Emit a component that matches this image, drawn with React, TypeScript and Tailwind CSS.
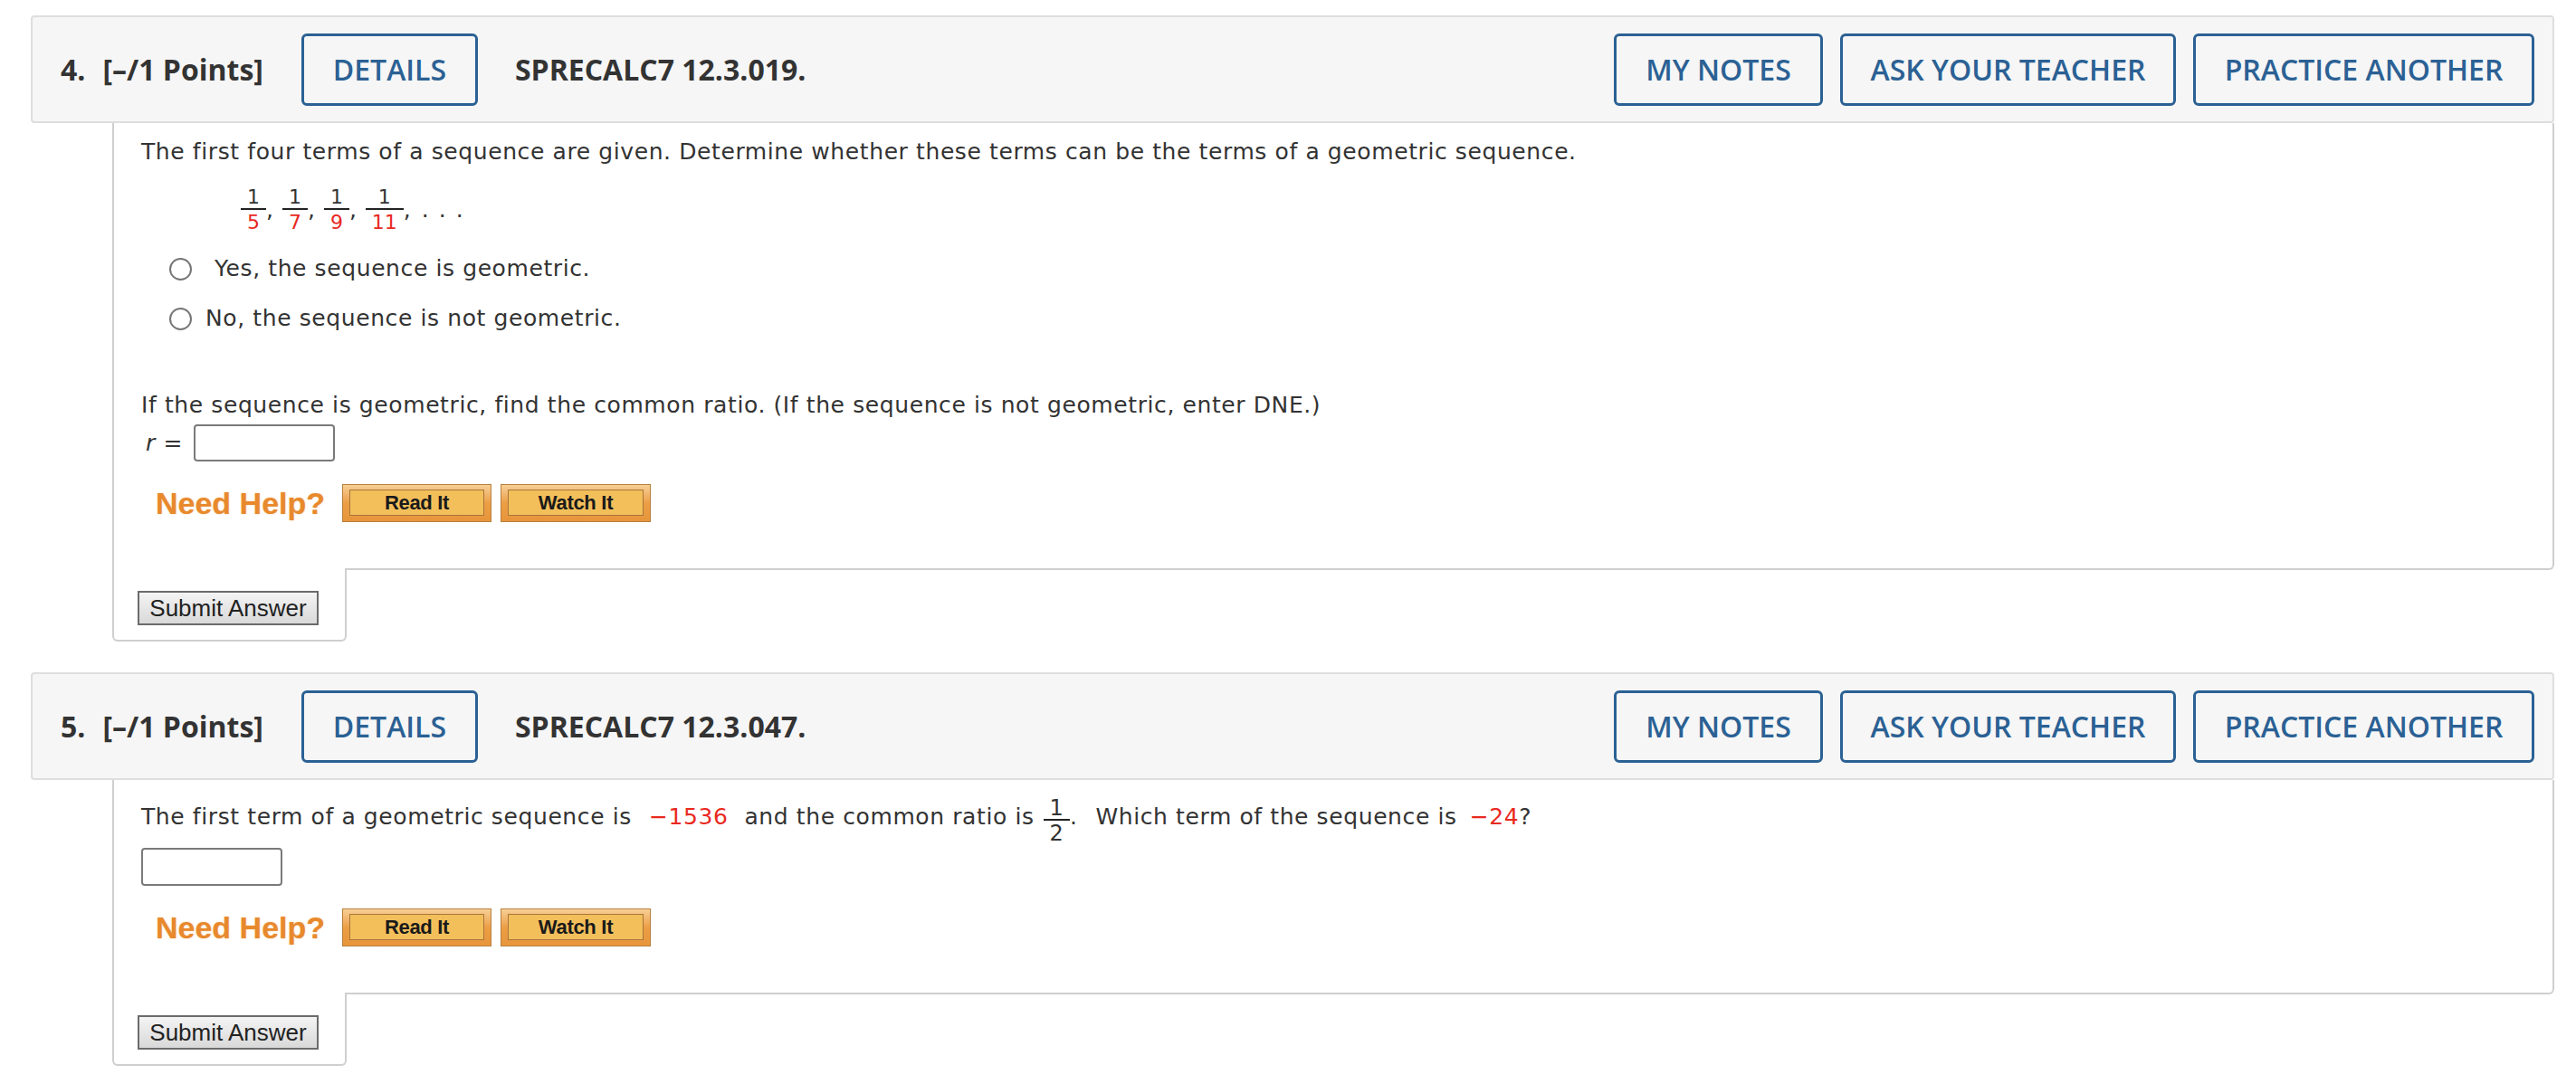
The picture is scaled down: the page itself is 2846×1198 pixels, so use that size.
import React from 'react';

const RED = 'text-[#e8291f]';

function HeaderBtn({ label, cls }: { label: string; cls: string }) {
  return (
    <div
      className={`${cls} h-[80px] box-border border-[3px] border-[#2b6194] rounded-[6px] flex items-center justify-center text-[32px] font-semibold text-[#2b6194]`}
    >
      {label}
    </div>
  );
}

function QuestionHeader({ num, code }: { num: string; code: string }) {
  return (
    <div className="h-[119px] box-border border-2 border-[#dedede] rounded-[4px] bg-[#f6f6f6] flex items-center pl-[31px] pr-[20px] font-['Open_Sans',sans-serif] text-[32px] font-bold text-[#333]">
      <span>{num}</span>
      <span className="ml-[19px]">[–/1 Points]</span>
      <HeaderBtn label="DETAILS" cls="w-[195px] ml-[42px]" />
      <span className="ml-[41px]">{code}</span>
      <div className="ml-auto flex gap-[19px]">
        <HeaderBtn label="MY NOTES" cls="w-[231px]" />
        <HeaderBtn label="ASK YOUR TEACHER" cls="w-[371px]" />
        <HeaderBtn label="PRACTICE ANOTHER" cls="w-[377px]" />
      </div>
    </div>
  );
}

function Frac({ n, d, dRed = true, size = 'text-[22px]' }: { n: string; d: string; dRed?: boolean; size?: string }) {
  return (
    <span className={`inline-flex flex-col items-stretch ${size} leading-[22px] tracking-normal`}>
      <span className="px-[7px] text-center">{n}</span>
      <span className="mt-[1px] h-[2px] bg-[#222]" />
      <span className={`mt-[3px] px-[7px] text-center ${dRed ? RED : ''}`}>{d}</span>
    </span>
  );
}

function HelpBtn({ label, cls }: { label: string; cls: string }) {
  return (
    <div
      className={`${cls} h-[42px] box-border border border-[#b7803c] bg-gradient-to-b from-[#f7cf95] via-[#ec9e45] to-[#e7953b] p-[5px_7px_6px_7px]`}
    >
      <div className="h-full box-border border border-[#a8763a] bg-[#f3bf5b] flex items-center justify-center font-['Liberation_Sans',Arial,sans-serif] font-bold text-[22px] tracking-[-0.3px] text-[#1a1a1a]">
        {label}
      </div>
    </div>
  );
}

function NeedHelp() {
  return (
    <div className="flex items-center h-[42px] tracking-normal">
      <span className="ml-[16px] w-[206px] font-['Liberation_Sans',Arial,sans-serif] font-bold text-[34px] text-[#e8892d] [text-shadow:0_0_2px_rgba(240,170,90,0.6)]">
        Need Help?
      </span>
      <HelpBtn label="Read It" cls="w-[165px]" />
      <HelpBtn label="Watch It" cls="w-[166px] ml-[10px]" />
    </div>
  );
}

function Radio({ cls }: { cls: string }) {
  return <span className={`${cls} w-[25px] h-[25px] shrink-0 box-border rounded-full border-2 border-[#767676] bg-white`} />;
}

function AnswerBox({ cls }: { cls: string }) {
  return <div className={`${cls} w-[156px] h-[41px] box-border border-2 border-[#7a7a7a] rounded-[4px] bg-white`} />;
}

function SubmitTab() {
  return (
    <div className="-mt-[2px] w-[259px] h-[81px] box-border border-x-2 border-b-2 border-[#cfcfcf] rounded-b-[6px] bg-white pl-[26px] pt-[25px]">
      <div className="w-[200px] h-[38px] box-border border-2 border-[#6b6b6b] bg-gradient-to-b from-[#f4f4f4] to-[#d9d9d9] flex items-center justify-center font-['Liberation_Sans',Arial,sans-serif] text-[26px] text-[#222]">
        Submit Answer
      </div>
    </div>
  );
}

const bodyCls =
  "border-x-2 border-b-2 border-[#cfcfcf] rounded-br-[6px] pl-[30px] font-['DejaVu_Sans','Verdana',sans-serif] text-[25px] tracking-[0.6px] text-[#333]";

export default function App() {
  return (
    <div className="w-[2846px] min-h-[1198px] bg-white pl-[34px] pt-[17px]">
      <div className="w-[2788px]">
        {/* question 4 */}
        <QuestionHeader num="4." code="SPRECALC7 12.3.019." />
        <div className="ml-[90px]">
          <div className={`${bodyCls} pt-[17px] pb-[51px]`}>
            <div className="leading-[30px]">
              The first four terms of a sequence are given. Determine whether these terms can be the terms of a geometric sequence.
            </div>
            <div className="mt-[22px] ml-[110px] h-[54px] flex items-center leading-[24px] tracking-normal">
              <Frac n="1" d="5" />
              <span className="mr-[10px]">,</span>
              <Frac n="1" d="7" />
              <span className="mr-[10px]">,</span>
              <Frac n="1" d="9" />
              <span className="mr-[10px]">,</span>
              <Frac n="1" d="11" />
              <span className="mr-[12px]">,</span>
              <span className="flex gap-[11px]">
                <span>.</span>
                <span>.</span>
                <span>.</span>
              </span>
            </div>
            <div className="mt-[23px] h-[30px] flex items-center">
              <Radio cls="ml-[31px]" />
              <span className="ml-[25px]">Yes, the sequence is geometric.</span>
            </div>
            <div className="mt-[25px] h-[30px] flex items-center">
              <Radio cls="ml-[31px]" />
              <span className="ml-[15px]">No, the sequence is not geometric.</span>
            </div>
            <div className="mt-[66px] leading-[30px]">
              If the sequence is geometric, find the common ratio. (If the sequence is not geometric, enter DNE.)
            </div>
            <div className="mt-[6px] flex items-center">
              <span className="ml-[5px]">
                <i>r</i> =
              </span>
              <AnswerBox cls="ml-[12px]" />
            </div>
            <div className="mt-[25px]">
              <NeedHelp />
            </div>
          </div>
          <SubmitTab />
        </div>

        {/* question 5 */}
        <div className="mt-[34px]">
          <QuestionHeader num="5." code="SPRECALC7 12.3.047." />
        </div>
        <div className="ml-[90px]">
          <div className={`${bodyCls} pt-[16px] pb-[51px]`}>
            <div className="h-[50px] flex items-center whitespace-pre">
              <span>The first term of a geometric sequence is</span>
              <span className={`ml-[19px] ${RED}`}>−1536</span>
              <span className="ml-[18px]">and the common ratio is</span>
              <span className="ml-[10px]">
                <Frac n="1" d="2" dRed={false} size="text-[24px]" />
              </span>
              <span>.</span>
              <span className="ml-[20px]">Which term of the sequence is</span>
              <span className={`ml-[14px] ${RED}`}>−24</span>
              <span>?</span>
            </div>
            <AnswerBox cls="mt-[9px] w-[154px] h-[42px]" />
            <div className="mt-[25px]">
              <NeedHelp />
            </div>
          </div>
          <SubmitTab />
        </div>
      </div>
    </div>
  );
}
